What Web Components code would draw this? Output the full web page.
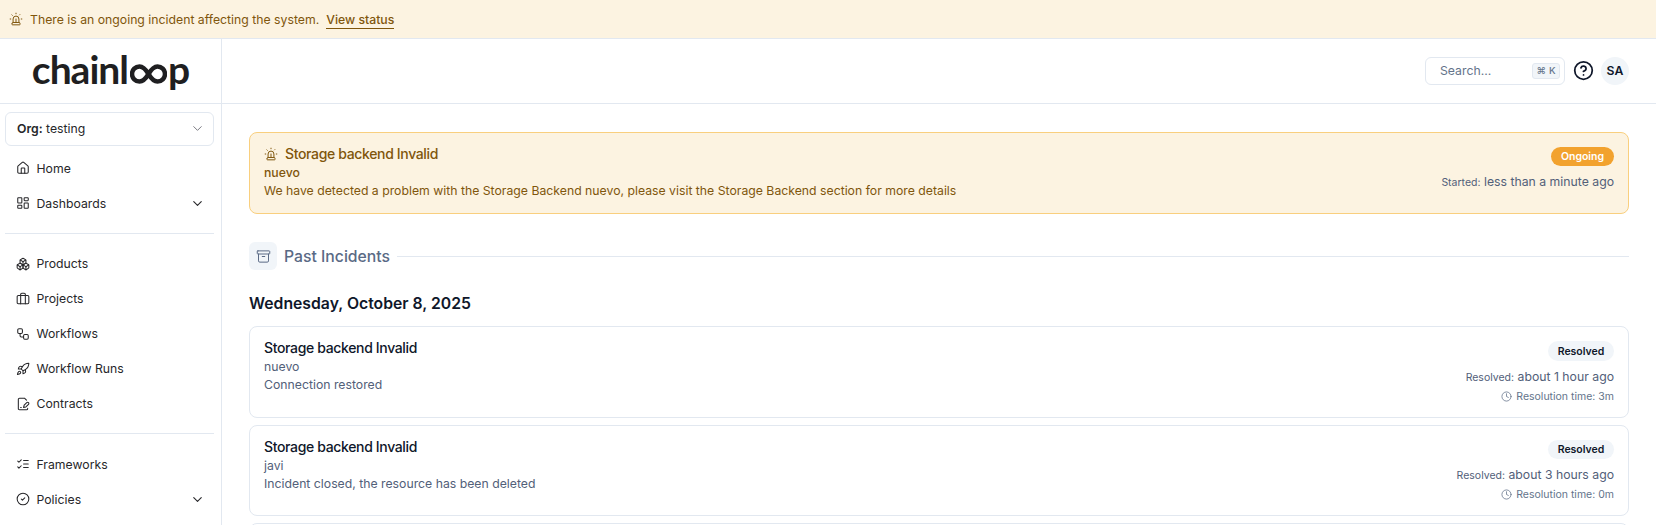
<!DOCTYPE html>
<html><head><meta charset="utf-8"><style>
html,body{margin:0;padding:0;height:525px;overflow:hidden;background:#fff;font-family:Inter,"Liberation Sans",sans-serif;color:#0f172a}
</style></head><body>
<x-app></x-app>
<script>
const I={
siren:'<path d="M7 18v-6a5 5 0 1 1 10 0v6"/><path d="M5 21a1 1 0 0 0 1 1h12a1 1 0 0 0 1-1v-1a2 2 0 0 0-2-2H7a2 2 0 0 0-2 2z"/><path d="M21 12h1"/><path d="M18.5 4.500 18 5"/><path d="M2 12h1"/><path d="M12 2v1"/><path d="m4.929 4.929.707.707"/><path d="M12 12v6"/>',
home:'<path d="M15 21v-8a1 1 0 0 0-1-1h-4a1 1 0 0 0-1 1v8"/><path d="M3 10a2 2 0 0 1 .709-1.528l7-5.999a2 2 0 0 1 2.582 0l7 5.999A2 2 0 0 1 21 10v9a2 2 0 0 1-2 2H5a2 2 0 0 1-2-2z"/>',
dash:'<rect width="7" height="9" x="3" y="3" rx="1"/><rect width="7" height="5" x="14" y="3" rx="1"/><rect width="7" height="9" x="14" y="12" rx="1"/><rect width="7" height="5" x="3" y="16" rx="1"/>',
boxes:'<path d="M2.97 12.920A2 2 0 0 0 2 14.630v3.240a2 2 0 0 0 .97 1.710l3 1.800a2 2 0 0 0 2.060 0L12 19v-5.500l-5-3-4.030 2.420Z"/><path d="m7 16.500-4.740-2.850"/><path d="m7 16.500 5-3"/><path d="M7 16.500v5.170"/><path d="M12 13.500V19l3.970 2.380a2 2 0 0 0 2.060 0l3-1.800a2 2 0 0 0 .97-1.710v-3.240a2 2 0 0 0-.97-1.710L17 10.500l-5 3Z"/><path d="m17 16.500-5-3"/><path d="m17 16.500 4.740-2.850"/><path d="M17 16.500v5.170"/><path d="M7.970 4.420A2 2 0 0 0 7 6.130v4.370l5 3 5-3V6.130a2 2 0 0 0-.97-1.710l-3-1.800a2 2 0 0 0-2.060 0l-3 1.800Z"/><path d="M12 8 7.260 5.150"/><path d="m12 8 4.740-2.850"/><path d="M12 13.500V8"/>',
brief:'<path d="M16 20V4a2 2 0 0 0-2-2h-4a2 2 0 0 0-2 2v16"/><rect width="20" height="14" x="2" y="6" rx="2"/>',
flow:'<rect width="8" height="8" x="3" y="3" rx="2"/><path d="M7 11v4a2 2 0 0 0 2 2h4"/><rect width="8" height="8" x="13" y="13" rx="2"/>',
rocket:'<path d="M4.500 16.500c-1.500 1.260-2 5-2 5s3.740-.5 5-2c.71-.84.7-2.130-.09-2.910a2.180 2.180 0 0 0-2.910-.09z"/><path d="m12 15-3-3a22 22 0 0 1 2-3.950A12.880 12.880 0 0 1 22 2c0 2.720-.78 7.500-6 11a22.350 22.350 0 0 1-4 2z"/><path d="M9 12H4s.55-3.030 2-4c1.620-1.080 5 0 5 0"/><path d="M12 15v5s3.030-.55 4-2c1.080-1.620 0-5 0-5"/>',
sign:'<path d="M20 19.500v.5a2 2 0 0 1-2 2H6a2 2 0 0 1-2-2V4a2 2 0 0 1 2-2h8.500L18 5.500"/><path d="M8 18h1"/><path d="M18.420 9.610a2.100 2.100 0 1 1 2.970 2.970L16.950 17 13 18l.99-3.950 4.430-4.440Z"/>',
todo:'<path d="m3 17 2 2 4-4"/><path d="m3 7 2 2 4-4"/><path d="M13 6h8"/><path d="M13 12h8"/><path d="M13 18h8"/>',
check:'<circle cx="12" cy="12" r="10"/><path d="m9 12 2 2 4-4"/>',
chev:'<path d="m6 9 6 6 6-6"/>',
help:'<circle cx="12" cy="12" r="10"/><path d="M9.090 9a3 3 0 0 1 5.830 1c0 2-3 3-3 3"/><path d="M12 17h.01"/>',
archive:'<rect width="20" height="5" x="2" y="3" rx="1"/><path d="M4 8v11a2 2 0 0 0 2 2h12a2 2 0 0 0 2-2V8"/><path d="M10 12h4"/>',
clock:'<circle cx="12" cy="12" r="10"/><polyline points="12 6 12 12 16 14"/>'
};
const ico=(n,s,w=2)=>`<svg xmlns="http://www.w3.org/2000/svg" width="${s}" height="${s}" viewBox="0 0 24 24" fill="none" stroke="currentColor" stroke-width="${w}" stroke-linecap="round" stroke-linejoin="round" style="flex:none;display:block">${I[n]}</svg>`;
function def(name,css,html){customElements.define(name,class extends HTMLElement{constructor(){super();const r=this.attachShadow({mode:'open'});r.innerHTML=`<style>${css}</style>`+(typeof html==='function'?html(this):html)}})}

def('x-banner',`:host{display:flex;align-items:center;height:38px;box-sizing:content-box;background:#fcf3e1;border-bottom:1px solid #e2e8f0;padding-left:9px;gap:7px;color:#80560c;font-size:12.250px;font-family:Inter,sans-serif}
a{font-weight:500;border-bottom:1px solid #80560c;line-height:17px;padding-top:1px;color:#80560c;text-decoration:none}`,
`${ico('siren',14,1.700)}<span>There is an ongoing incident affecting the system.</span><a href="#">View status</a>`);

def('x-logo',`:host{display:flex;align-items:center;justify-content:center;height:64px;border-bottom:1px solid #e2e8f0;box-sizing:content-box}
.w{display:flex;align-items:baseline;font:700 39px/1 Lato,"Noto Sans",sans-serif;letter-spacing:-1px;color:#1f1f21;transform:translateY(-2px)}
svg{display:block;margin:0 1px 0 2px}`,
`<div class="w"><span>chainl</span><svg width="37" height="20" viewBox="0 0 37 20" fill="none" stroke="#1f1f21" stroke-width="4.500"><path d="M18.500 10C15.500 5 13 2.500 9.500 2.500a7.500 7.500 0 0 0 0 15C13 17.500 15.500 15 18.500 10C21.500 5 24 2.500 27.500 2.500a7.500 7.500 0 0 1 0 15C24 17.500 21.500 15 18.500 10Z"/></svg><span>p</span></div>`);

def('x-nav-item',`:host{display:flex;align-items:center;height:35px;padding:0 16.500px 0 16px;gap:6.500px;font-size:12.250px;box-sizing:border-box;color:#27272a}
span{flex:1}`,
el=>`${ico(el.getAttribute('icon'),14,1.800)}<span>${el.getAttribute('label')}</span>${el.hasAttribute('more')?ico('chev',15,1.800):''}`);

def('x-sep',`:host{display:block;height:1px;background:#e2e8f0;margin:12.250px 7px 12.250px 5px}`,'');

def('x-org',`:host{display:flex;align-items:center;height:34px;box-sizing:border-box;margin:7.500px 7px 5px 5px;border:1px solid #e2e8f0;border-radius:6px;padding:0 8.500px 0 11px;font-size:12.250px;color:#27272a;justify-content:space-between}b{font-weight:600}svg{color:#71717a}`,
`<div><b>Org:</b> testing</div>${ico('chev',15,1.500)}`);

def('x-sidebar',`:host{display:flex;flex-direction:column;width:222px;border-right:1px solid #e2e8f0;box-sizing:border-box;height:486px;overflow:hidden}`,
`<x-logo></x-logo><x-org></x-org><slot></slot>`);

def('x-topbar',`:host{display:flex;align-items:center;justify-content:flex-end;height:63px;padding-bottom:1px;border-bottom:1px solid #e2e8f0;box-sizing:content-box;padding-right:27px;gap:7.500px}
.s{width:140px;height:28px;box-sizing:border-box;border:1px solid #e2e8f0;border-radius:6px;display:flex;align-items:center;justify-content:space-between;padding:0 4px 0 14px;font-size:12.250px;color:#64748b}
kbd{font:500 9.600px Inter,sans-serif;background:#f1f5f9;border:1px solid #e2e8f0;border-radius:3px;height:16px;width:28px;box-sizing:border-box;display:flex;align-items:center;justify-content:center;gap:3px;color:#64748b}
.av{width:28px;height:28px;border-radius:50%;background:#f1f5f9;display:flex;align-items:center;justify-content:center;font:600 12.250px Inter,sans-serif;color:#0f172a}
svg{color:#0f172a}`,
`<div class="s"><span>Search...</span><kbd><span>⌘</span><span>K</span></kbd></div>${ico('help',21,2)}<div class="av">SA</div>`);

const cardCss=`:host{display:flex;justify-content:space-between;box-sizing:border-box;border:1px solid var(--b);border-radius:8px;padding:11px 14px 0;background:var(--bg);color:var(--c)}
.t{display:flex;align-items:center;gap:7px;font-size:14px;font-weight:500;letter-spacing:-.350px;line-height:20px;color:var(--tc)}
.n{font-size:12.250px;font-weight:var(--nw,400);line-height:17px;margin-top:0}
.d{font-size:12.250px;line-height:17px;margin-top:.5px}
.r{display:flex;flex-direction:column;align-items:flex-end;padding-top:3px}
.bd{font-size:10.500px;font-weight:600;height:var(--bh,20px);border-radius:10px;box-sizing:border-box;padding:0 9px;min-width:var(--bw,66px);justify-content:center;display:flex;align-items:center;background:var(--bb);color:var(--bc)}
.a{font-size:12.250px;line-height:18px;margin-top:var(--am,7px);color:#526079}.a small{font-size:10.500px}
.x{display:flex;align-items:center;gap:4px;font-size:10.500px;line-height:16px;margin-top:1.500px;color:#64748b}`;
def('x-incident',cardCss,el=>{const o=el.hasAttribute('ongoing');const g=k=>el.getAttribute(k)||'';
if(!g('status'))return '';
return `<div><div class="t">${o?ico('siren',14,1.700):''}<span>${g('title')}</span></div><div class="n">${g('name')}</div><div class="d">${g('desc')}</div></div>
<div class="r"><div class="bd">${g('status')}</div><div class="a"><small>${g('when-l')}:</small> ${g('when')}</div>${g('res')?`<div class="x">${ico('clock',11,1.700)}<span>Resolution time: ${g('res')}</span></div>`:''}</div>`});

def('x-section',`:host{display:flex;align-items:center;gap:7px;height:28px;margin:28px 0 0}
.b{width:28px;height:28px;background:#f1f5f9;border-radius:6px;display:flex;align-items:center;justify-content:center;color:#5a6a85}
span{font-size:15.750px;font-weight:500;color:#5a6a85}i{flex:1;height:1px;background:#e2e8f0}`,
`<div class="b">${ico('archive',15,1.600)}</div><span><slot></slot></span><i></i>`);

def('x-date',`:host{display:block;font-size:15.750px;font-weight:600;line-height:24px;margin:22px 0 10px;color:#0f172a}`,'<slot></slot>');

def('x-main',`:host{display:block;padding:28px 27px 0;height:421px;overflow:hidden;box-sizing:border-box}`,'<slot></slot>');

def('x-app',`:host{display:block;width:1656px;height:525px;overflow:hidden}.g{display:flex}.c{flex:1;min-width:0}
.alert{--b:#f9cf7e;--bg:#fcf3e1;--c:#80560c;--tc:#80560c;--bb:#f2a22e;--bc:#fff;--nw:500;--bh:19px;--bw:63px;--am:6.500px;height:82px}
.inc{--b:#e2e8f0;--bg:#fff;--c:#526079;--tc:#0f172a;--bb:#f1f5f9;--bc:#0f172a;margin-bottom:7.500px}
`,`<x-banner></x-banner><div class="g"><x-sidebar>
<x-nav-item icon="home" label="Home"></x-nav-item><x-nav-item icon="dash" label="Dashboards" more></x-nav-item><x-sep></x-sep>
<x-nav-item icon="boxes" label="Products"></x-nav-item><x-nav-item icon="brief" label="Projects"></x-nav-item><x-nav-item icon="flow" label="Workflows"></x-nav-item><x-nav-item icon="rocket" label="Workflow Runs"></x-nav-item><x-nav-item icon="sign" label="Contracts"></x-nav-item><x-sep></x-sep>
<x-nav-item icon="todo" label="Frameworks"></x-nav-item><x-nav-item icon="check" label="Policies" more></x-nav-item>
</x-sidebar><div class="c"><x-topbar></x-topbar><x-main>
<x-incident class="alert" ongoing title="Storage backend Invalid" name="nuevo" desc="We have detected a problem with the Storage Backend nuevo, please visit the Storage Backend section for more details" status="Ongoing" when-l="Started" when="less than a minute ago"></x-incident>
<x-section>Past Incidents</x-section>
<x-date>Wednesday, October 8, 2025</x-date>
<x-incident class="inc" style="height:91.500px" title="Storage backend Invalid" name="nuevo" desc="Connection restored" status="Resolved" when-l="Resolved" when="about 1 hour ago" res="3m"></x-incident>
<x-incident class="inc" style="height:90.500px;--bh:19px" title="Storage backend Invalid" name="javi" desc="Incident closed, the resource has been deleted" status="Resolved" when-l="Resolved" when="about 3 hours ago" res="0m"></x-incident>
<x-incident class="inc" style="height:91px"></x-incident>
</x-main></div></div>`);
</script></body></html>
